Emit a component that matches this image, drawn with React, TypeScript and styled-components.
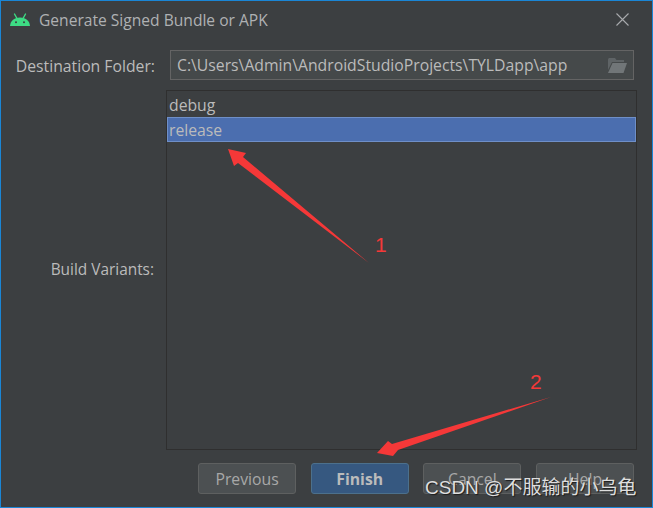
import React from "react";
import styled, { createGlobalStyle } from "styled-components";

const Global = createGlobalStyle`
  html, body { margin: 0; padding: 0; background: #3c3f41; }
  #root { width: 653px; height: 508px; }
`;

const Window = styled.div`
  position: relative;
  box-sizing: border-box;
  width: 653px;
  height: 508px;
  overflow: hidden;
  background: #3c3f41;
  border: 1px solid #1a86d6;
  color: #bbbbbb;
  font-family: "Open Sans", "Noto Sans", sans-serif;
  font-size: 15.75px;
  display: flex;
  flex-direction: column;
`;

const TitleBar = styled.div`
  height: 37px;
  flex: none;
  display: flex;
  align-items: center;
  padding: 0 23px 0 9px;
  gap: 9px;
  box-sizing: border-box;
`;

const Title = styled.div`
  flex: 1;
  font-size: 15.6px;
  color: #afb1b3;
  white-space: nowrap;
`;

const Body = styled.div`
  flex: 1;
  min-height: 0;
  display: grid;
  grid-template-columns: 165px 1fr;
  grid-template-rows: 32px 1fr;
  row-gap: 8px;
  padding: 12px 16px 13px 0;
`;

const Label = styled.div`
  justify-self: end;
  align-self: center;
  padding-right: 11px;
  white-space: nowrap;
`;

const BuildLabel = styled(Label)`
  padding: 0 12px 2px 0;
  font-size: 15.4px;
`;

const PathField = styled.div`
  box-sizing: border-box;
  height: 30px;
  margin: 0 2px 0 4px;
  display: flex;
  align-items: center;
  justify-content: space-between;
  padding: 0 6px 0 6px;
  background: #45494a;
  border: 1px solid #646464;
  white-space: nowrap;
`;

const VariantList = styled.div`
  box-sizing: border-box;
  border: 1px solid #2f2f2f;
  display: flex;
  flex-direction: column;
  padding-top: 1px;
  margin-right: -1px;
`;

const Variant = styled.div<{ $selected?: boolean }>`
  box-sizing: border-box;
  height: 25px;
  background: ${(p) => (p.$selected ? "#4b6eaf" : "transparent")};
  border: ${(p) => (p.$selected ? "1px solid #6f8fc7" : "none")};
  padding-left: ${(p) => (p.$selected ? "1px" : "2px")};
  line-height: ${(p) => (p.$selected ? "23px" : "25px")};
  padding-top: 1px;
`;

const Footer = styled.div`
  flex: none;
  display: flex;
  justify-content: flex-end;
  gap: 14.67px;
  padding: 0 18px 13px 0;
`;

const Button = styled.div<{ $primary?: boolean }>`
  box-sizing: border-box;
  width: 98px;
  height: 31px;
  display: flex;
  align-items: center;
  justify-content: center;
  border-radius: 3px;
  background: ${(p) => (p.$primary ? "#365880" : "#4c5052")};
  border: 1px solid ${(p) => (p.$primary ? "#4c708c" : "#5e6060")};
  font-weight: ${(p) => (p.$primary ? 700 : 400)};
  color: ${(p) => (p.$primary ? "#bbbbbb" : "#a8a8a8")};
`;

const Annotations = styled.svg`
  position: absolute;
  left: -1px;
  top: -1px;
  width: 653px;
  height: 508px;
  pointer-events: none;
`;

const Number = styled.div<{ $x: number; $y: number }>`
  position: absolute;
  left: ${(p) => p.$x}px;
  top: ${(p) => p.$y}px;
  color: #f53838;
  font-family: "Liberation Sans", sans-serif;
  font-size: 21px;
  line-height: 24px;
`;

const Watermark = styled.div`
  position: absolute;
  left: 424px;
  top: 475px;
  color: #dedede;
  font-family: "Liberation Sans", "Noto Sans CJK SC", sans-serif;
  font-size: 19px;
  line-height: 24px;
  white-space: nowrap;
  text-shadow: 1px 1px 1px #1c1c1c;
`;

const AndroidIcon = () => (
  <svg width="20" height="14" viewBox="0 0 20 14">
    <path fill="#3ddc84" d="M0 13C.4 8.1 3.7 4.5 10 4.5s9.6 3.6 10 8.5z" />
    <path stroke="#3ddc84" strokeWidth="1.4" strokeLinecap="round" d="M4.5 1 7 5.5M15.5 1 13 5.5" />
    <circle cx="6" cy="9.2" r="1" fill="#3c3f41" />
    <circle cx="14" cy="9.2" r="1" fill="#3c3f41" />
  </svg>
);

const CloseIcon = () => (
  <svg width="13" height="13" viewBox="0 0 13 13">
    <path stroke="#a9abad" strokeWidth="1.1" fill="none" d="M.5.5l12 12M12.5.5l-12 12" />
  </svg>
);

const FolderIcon = () => (
  <svg width="19" height="15" viewBox="0 0 19 15">
    <path fill="#5f6466" d="M0 1.5 .8 0H7l1.5 2H16v2H4L0 12z" />
    <path fill="#717678" d="M4.5 5H19l-3.5 10H0z" />
  </svg>
);

export default function App() {
  return (
    <Window>
      <Global />
      <TitleBar>
        <AndroidIcon />
        <Title>Generate Signed Bundle or APK</Title>
        <CloseIcon />
      </TitleBar>
      <Body>
        <Label>Destination Folder:</Label>
        <PathField>
          <span>C:\Users\Admin\AndroidStudioProjects\TYLDapp\app</span>
          <FolderIcon />
        </PathField>
        <BuildLabel>Build Variants:</BuildLabel>
        <VariantList>
          <Variant>debug</Variant>
          <Variant $selected>release</Variant>
        </VariantList>
      </Body>
      <Footer>
        <Button>Previous</Button>
        <Button $primary>Finish</Button>
        <Button>Cancel</Button>
        <Button>Help</Button>
      </Footer>
      <Annotations viewBox="0 0 653 508">
        <polygon fill="#f53838" points="228,149 246,153 243,157 369,263 238,163 234,166" />
        <polygon fill="#f53838" points="377,453 388,441 392,444 551,397 398,450 393,456" />
      </Annotations>
      <Number $x={374} $y={232}>1</Number>
      <Number $x={529} $y={369}>2</Number>
      <Watermark>CSDN @不服输的小乌龟</Watermark>
    </Window>
  );
}
